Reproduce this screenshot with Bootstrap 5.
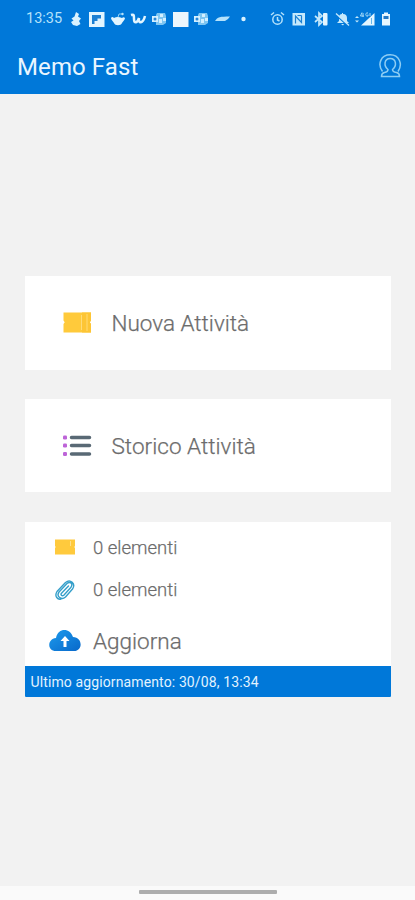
<!DOCTYPE html>
<html lang="it">
<head>
<meta charset="utf-8">
<meta name="viewport" content="width=device-width, initial-scale=1">
<title>Memo Fast</title>
<link href="https://cdn.jsdelivr.net/npm/bootstrap@5.3.0/dist/css/bootstrap.min.css" rel="stylesheet">
<style>
body{font-family:Roboto,"Liberation Sans",sans-serif;background:#f2f2f2;height:900px;overflow:hidden}
svg{display:block;flex:none}
.top-area{background:#0078d9;height:94px;color:#eaf6ff}
.status-row{height:38px;padding-left:26px;padding-right:19px}
.clock{font-size:14.5px;line-height:20px;width:38px;color:#b5e2fb}
.title-row{height:56px;padding:0 13px 0 17px}
.app-title{font-size:24px;line-height:28px;letter-spacing:.1px;margin-top:2px}
.main-area{padding:182px 24px 0 25px}
.tile{background:#fff;color:#6c6c6c;font-size:22.5px;line-height:28px;font-weight:300;-webkit-text-stroke:.25px #6c6c6c}
.action-tile{padding-left:37px;height:94px}
.action-tile svg{margin-right:19.500px}
.second-tile{margin-top:29px;height:93px}
.label-history{letter-spacing:.03px}
.summary-tile{margin-top:30px;height:175px}
.sum-row{padding-left:24px}
.sum-row svg{margin-right:12px}
.count-row{height:42px;font-size:18.5px}
.first-count{height:47px;padding-top:4px}
.refresh-row{height:54px;padding-top:6px}
.update-bar{background:#0078d9;color:#e2f3ff;height:31px;padding-left:5.500px;font-size:14px;line-height:20px;letter-spacing:.12px;border-radius:0 0 1px 1px}
.update-bar,.clock{-webkit-text-stroke:0;font-weight:400}
.home-area{background:#fafafa;height:14px}
.home-line{width:138px;height:4px;background:#adadad;border-radius:1px;margin-top:-2px}
</style>
</head>
<body class="d-flex flex-column m-0">
<header class="top-area">
  <div class="status-row d-flex align-items-center">
    <span class="clock">13:35</span>
    <div class="d-flex align-items-center">
      <svg width="22" height="20" viewBox="0 0 22 20"><path d="M12 3l3 2-1 2.500 3 2-2 2.500 1.500 3-3.500 2-4-1-2-3 2.500-1.500-2-2 3-2z" fill="#d9f2ff"/></svg>
      <svg width="22" height="20" viewBox="0 0 22 20"><path d="M3 3h15.500v15H3z" fill="#e2f5ff"/><path d="M6 6h9v3.500h-3.500V12H8.500v3H6z" fill="#1c80d3"/></svg>
      <svg width="20" height="20" viewBox="0 0 20 20"><path d="M3 9c1-1.500 2-1 3 0 2-1.500 5-1.500 8 0 1-1 2-1 3 0 0 2-2 3-3 5-1 3-7 3-8 0-1-2-3-3-3-5z" fill="#e2f5ff"/><path d="M10 8l1-3h3" fill="none" stroke="#8fd0f5"/><circle cx="14.500" cy="5" r="1.200" fill="#b5e2fb"/></svg>
      <svg width="21" height="20" viewBox="0 0 21 20"><path d="M3 6c3-1 3 0 3 4s3 5 5-1c-1 6 4 6 6-2" fill="none" stroke="#e2f5ff" stroke-width="2.500"/></svg>
      <svg width="21" height="20" viewBox="0 0 21 20"><path d="M8 4h8l1 3v7l-3 2H7V6z" fill="#7fc6f2"/><path d="M3 7h6v6H3zM11 5h3v3h-3zM10 10h3v4h-3zM14 9h3v3h-3z" fill="#d3efff"/><circle cx="6" cy="10" r="1.500" fill="#2786d6"/></svg>
      <svg width="21" height="20" viewBox="0 0 21 20"><path d="M3 3h15.500v15H3z" fill="#edf6fc"/></svg>
      <svg width="21" height="20" viewBox="0 0 21 20"><path d="M8 4h8l1 3v7l-3 2H7V6z" fill="#7fc6f2"/><path d="M3 7h6v6H3zM11 5h3v3h-3zM10 10h3v4h-3zM14 9h3v3h-3z" fill="#d3efff"/><circle cx="6" cy="10" r="1.500" fill="#2786d6"/></svg>
      <svg width="21" height="20" viewBox="0 0 21 20"><path d="M3 12C5.500 8 8 7.500 18 7.500l-2 2.500-3 2z" fill="#b5e2fb"/></svg>
      <svg width="21" height="20" viewBox="0 0 21 20"><circle cx="10.500" cy="10" r="2.200" fill="#d9f2ff"/></svg>
    </div>
    <div class="d-flex align-items-center ms-auto">
      <svg width="21" height="20" viewBox="0 0 21 20" fill="none" stroke="#b5e2fb" stroke-width="1.500"><circle cx="10.500" cy="10.500" r="4.700"/><path d="M4 6l3-2.500M17 6l-3-2.500M10.500 8v3l2 1"/></svg>
      <svg width="22" height="20" viewBox="0 0 22 20"><path d="M4.500 4h12.500v12.500H4.500z" fill="#c5e9fc"/><path d="M7.500 14.500V7l6 6.500V6.500M9.500 6.500h4" fill="none" stroke="#1c80d3" stroke-width="1.200"/></svg>
      <svg width="22" height="20" viewBox="0 0 22 20"><path d="M5 7l7 6-3 3V4l3 3-7 6" fill="none" stroke="#c5e9fc" stroke-width="1.700"/><rect x="13" y="4" width="4.500" height="12.500" rx="1" fill="#e2f5ff"/></svg>
      <svg width="22" height="20" viewBox="0 0 22 20"><path d="M5 14l2-2V9c0-3 1-4 3-4V4h1v1c3 0 4 2 4 4v3l2 2zM9 15h3l-1 1.500z" fill="#c5e9fc"/><path d="M4 6l13 12" stroke="#0078d9" stroke-width="1.200"/><path d="M4 4.500l13 12" stroke="#c5e9fc" stroke-width="1.300"/></svg>
      <svg width="24" height="20" viewBox="0 0 24 20"><path d="M1 9l2-2 2 2zM1 11.500l2 2 2-2z" fill="#c5e9fc"/><path d="M20.500 4v12.500H7z" fill="#e2f5ff"/><path d="M8 3.500L6.500 7H10M9 4v4M14 4c-3-1-3 4 0 3V5.500M16 4v3" fill="none" stroke="#a9dcf8"/><path d="M17.500 9v6" stroke="#63b5eb"/></svg>
      <svg width="18" height="20" viewBox="0 0 18 20"><path d="M4 5h2V3.500h4V5h2v11.500H4z" fill="#e5f6ff"/><path d="M5.500 7h5v3h-5z" fill="#2379c5"/></svg>
    </div>
  </div>
  <div class="title-row d-flex align-items-center justify-content-between">
    <h1 class="app-title mb-0 fw-normal">Memo Fast</h1>
    <svg width="24" height="28" viewBox="0 0 24 28" fill="none" stroke="#8dcdf4" stroke-width="1.500"><path d="M4.500 19.500C-1 12 3 2.800 12.200 2.800S25 12.500 20 19.500"/><path d="M10 17.500C5.500 14 6 6.500 12.200 6.500s6.800 7.500 2.300 11c0 2 1 2.500 4 3 2.500.5 3 1.500 3 4h-18c0-2.500.5-3.500 3-4 2.500-.5 3.500-1 3.500-3z"/></svg>
  </div>
</header>
<main class="main-area flex-grow-1">
  <div class="tile action-tile d-flex align-items-center">
    <svg width="30" height="24" viewBox="0 0 30 24"><path d="M1.500 1.500H29v8l-1.200 1.700L29 13v8.500H1.500V13l1.200-1.800-1.200-1.700z" fill="#ffca3b"/><path d="M20 1.500h9v8l-1.200 1.700L29 13v8.500h-9z" fill="#fdc535"/><path d="M19.500 4v15M25 3v17" stroke="#ffdb77"/></svg>
    <span class="label-new">Nuova Attività</span>
  </div>
  <div class="tile action-tile second-tile d-flex align-items-center">
    <svg width="30" height="24" viewBox="0 0 30 24"><g fill="#bd64d8"><rect x="1" y="1.500" width="4" height="4" rx="1.300"/><rect x="1" y="9.500" width="4" height="4" rx="1.300"/><rect x="1" y="18" width="4" height="4" rx="1.300"/></g><path d="M9.500 3.500H27.500M9.500 11.500H27.500M9.500 20H27.500" stroke="#596975" stroke-width="3.500" stroke-linecap="round"/></svg>
    <span class="label-history">Storico Attività</span>
  </div>
  <section class="tile summary-tile d-flex flex-column">
    <div class="sum-row count-row first-count d-flex align-items-center">
      <svg width="32" height="20" viewBox="0 0 32 20"><path d="M6 1.500h20v6.500l-.7 1 .7 1v6.500H6V10l.7-1L6 8z" fill="#ffca3d"/><path d="M21.500 3v5" stroke="#ffe08a"/></svg>
      <span>0 elementi</span>
    </div>
    <div class="sum-row count-row d-flex align-items-center">
      <svg width="32" height="22" viewBox="0 0 32 22" fill="none" stroke="#359fca" stroke-width="1.400" stroke-linecap="round" stroke-linejoin="round"><path d="M19.500 7l-7 7.200c-1.300 2 .8 3.300 2.300 2l7.200-8c2.500-4-1.500-6-4-3.700l-8 8.500c-3 4.500 2.500 8.500 6.500 5l7-8c3.500-5-2-10.500-7-6.500L8 12.500c-3 5 1 8.500 4 7.500"/></svg>
      <span>0 elementi</span>
    </div>
    <div class="sum-row refresh-row d-flex align-items-center">
      <svg width="32" height="24" viewBox="0 0 32 24"><defs><linearGradient id="cloudFill" x2="1" y2="1"><stop stop-color="#1d9bed"/><stop offset="1" stop-color="#0868ca"/></linearGradient></defs><path d="M7 22C-2 22-2 10 7 9 9-1.500 21-1.500 24 8c10 .5 10 14 1 14z" fill="url(#cloudFill)"/><path d="M16 7l4.500 5h-3v6h-3v-6h-3z" fill="#fff"/></svg>
      <span class="label-refresh">Aggiorna</span>
    </div>
    <div class="update-bar mt-auto d-flex align-items-center"><span>Ultimo aggiornamento: 30/08, 13:34</span></div>
  </section>
</main>
<footer class="home-area d-flex justify-content-center align-items-center"><div class="home-line"></div></footer>
<script src="https://cdn.jsdelivr.net/npm/bootstrap@5.3.0/dist/js/bootstrap.bundle.min.js"></script>
</body>
</html>
